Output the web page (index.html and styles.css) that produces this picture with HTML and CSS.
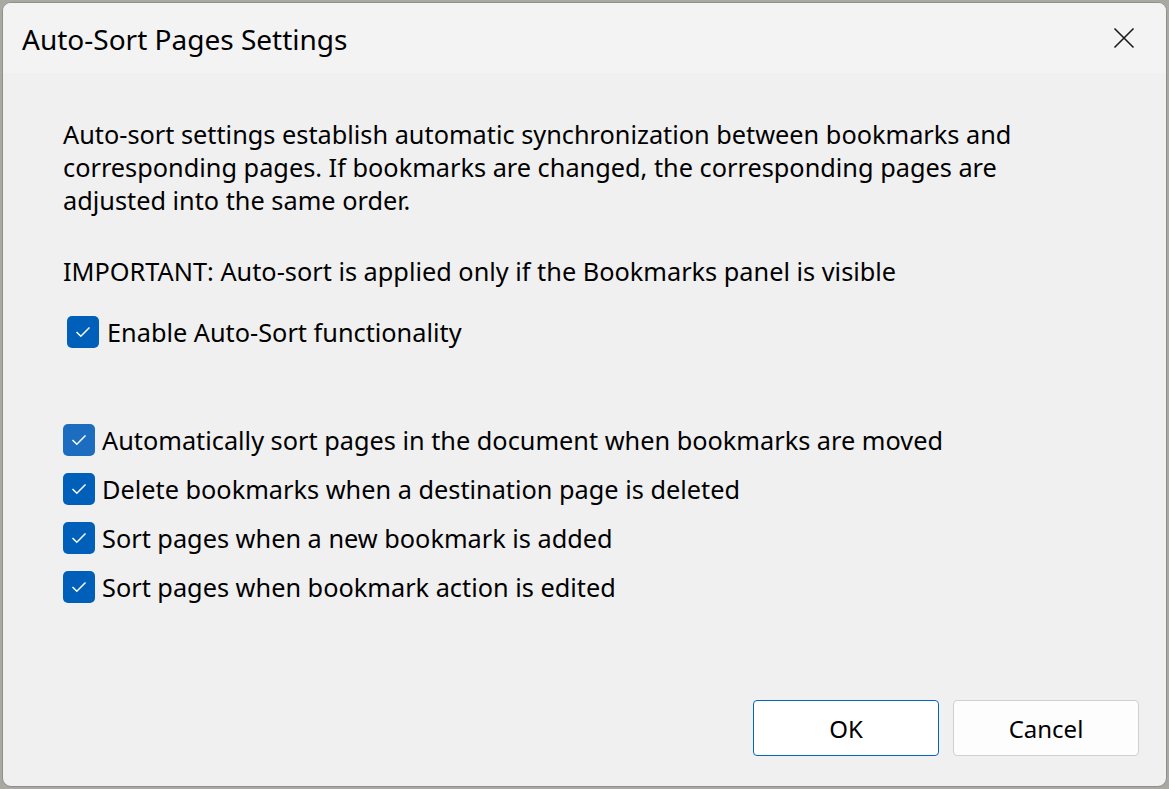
FILE: index.html
```html
<!DOCTYPE html>
<html lang="en">
<head>
  <meta charset="UTF-8">
  <title>Auto-Sort Pages Settings</title>
  <link rel="stylesheet" href="styles.css">
</head>
<body>
  <div class="dialog">
    <div class="titlebar">
      <div class="title">Auto-Sort Pages Settings</div>
      <button class="close" aria-label="Close">
        <svg width="22" height="22" viewBox="0 0 22 22"><path d="M1.5 1.5 L20.5 20.5 M20.5 1.5 L1.5 20.5" stroke="#1a1a1a" stroke-width="1.6" fill="none"/></svg>
      </button>
    </div>
    <div class="content">
      <p class="intro">Auto-sort settings establish automatic synchronization between bookmarks and corresponding pages. If bookmarks are changed, the corresponding pages are adjusted into the same order.</p>
      <p class="important">IMPORTANT: Auto-sort is applied only if the Bookmarks panel is visible</p>
      <label class="check check-main">
        <span class="box"><svg width="16" height="12" viewBox="0 0 16 12"><path d="M1.5 6 L5.8 10.2 L14.5 1.5" stroke="#fff" stroke-width="1.5" fill="none"/></svg></span>
        <span>Enable Auto-Sort functionality</span>
      </label>
      <div class="options">
        <label class="check">
          <span class="box box-hover"><svg width="16" height="12" viewBox="0 0 16 12"><path d="M1.5 6 L5.8 10.2 L14.5 1.5" stroke="#fff" stroke-width="1.5" fill="none"/></svg></span>
          <span>Automatically sort pages in the document when bookmarks are moved</span>
        </label>
        <label class="check">
          <span class="box"><svg width="16" height="12" viewBox="0 0 16 12"><path d="M1.5 6 L5.8 10.2 L14.5 1.5" stroke="#fff" stroke-width="1.5" fill="none"/></svg></span>
          <span>Delete bookmarks when a destination page is deleted</span>
        </label>
        <label class="check">
          <span class="box"><svg width="16" height="12" viewBox="0 0 16 12"><path d="M1.5 6 L5.8 10.2 L14.5 1.5" stroke="#fff" stroke-width="1.5" fill="none"/></svg></span>
          <span>Sort pages when a new bookmark is added</span>
        </label>
        <label class="check">
          <span class="box"><svg width="16" height="12" viewBox="0 0 16 12"><path d="M1.5 6 L5.8 10.2 L14.5 1.5" stroke="#fff" stroke-width="1.5" fill="none"/></svg></span>
          <span>Sort pages when bookmark action is edited</span>
        </label>
      </div>
    </div>
    <div class="footer">
      <button class="button button-ok">OK</button>
      <button class="button">Cancel</button>
    </div>
  </div>
</body>
</html>
```

FILE: styles.css
```css
* {
  box-sizing: border-box;
  margin: 0;
  padding: 0;
}

body {
  width: 1169px;
  height: 789px;
  padding: 2px;
  background-color: #a9a9a1;
  font-family: "Noto Sans", "Open Sans", sans-serif;
  color: #000;
  overflow: hidden;
}

.dialog {
  display: flex;
  flex-direction: column;
  width: 1165px;
  height: 785px;
  background-color: #f0f0f0;
  border: 1px solid #8f8f8f;
  border-radius: 9px;
  overflow: hidden;
}

.titlebar {
  display: flex;
  align-items: center;
  justify-content: space-between;
  height: 70px;
  padding: 0 20px 0 19px;
  background-color: #f3f3f3;
}

.title {
  font-size: 28px;
  padding-top: 1px;
}

.close {
  display: flex;
  align-items: center;
  justify-content: center;
  width: 40px;
  height: 40px;
  border: none;
  background: none;
  margin-right: 2px;
}

.content {
  flex: 1;
  padding: 45px 40px 0 60px;
  font-size: 25.3px;
  line-height: 33px;
}

.intro {
  width: 960px;
}

.important {
  margin-top: 38px;
}

.check {
  display: flex;
  align-items: center;
  gap: 7px;
  height: 32px;
}

.check-main {
  margin-top: 28px;
  margin-left: 4px;
  gap: 8px;
}

.box {
  display: flex;
  align-items: center;
  justify-content: center;
  flex-shrink: 0;
  width: 32px;
  height: 32px;
  border-radius: 5px;
  background-color: #005fb8;
}

.box-hover {
  background-color: #1c6cc0;
}

.options {
  display: flex;
  flex-direction: column;
  gap: 17px;
  margin-top: 76px;
}

.footer {
  display: flex;
  justify-content: flex-end;
  gap: 14px;
  padding: 0 27px 30px 0;
}

.button {
  width: 186px;
  height: 56px;
  font-family: "Noto Sans", "Open Sans", sans-serif;
  font-size: 24px;
  color: #000;
  background-color: #fdfdfd;
  border: 1px solid #d0d0d0;
  border-radius: 4px;
}

.button-ok {
  background-color: #fff;
  border-color: #0067c0;
}
```
